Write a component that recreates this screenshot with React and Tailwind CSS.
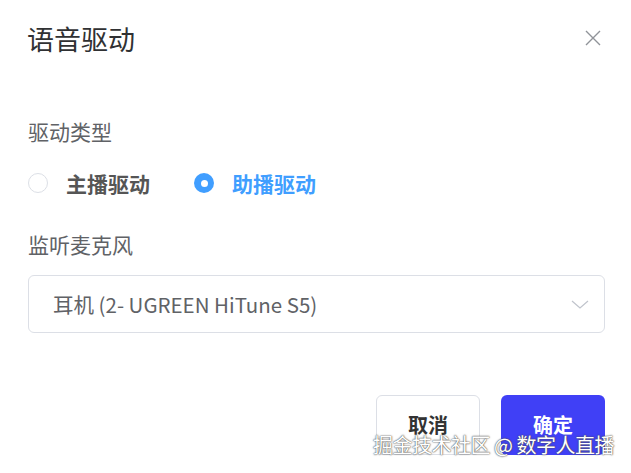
import React, { useState } from 'react';

const font = { fontFamily: '"Noto Sans CJK SC", "Noto Sans", sans-serif' };

function Radio({ checked, label, onClick }) {
  return (
    <button type="button" onClick={onClick} className="flex items-center gap-[18px]">
      {checked ? (
        <span className="w-[20px] h-[20px] rounded-full bg-[#409eff] flex items-center justify-center">
          <span className="w-[7px] h-[7px] rounded-full bg-white" />
        </span>
      ) : (
        <span className="w-[20px] h-[20px] rounded-full border border-[#dcdfe6] bg-white" />
      )}
      <span className={`text-[21px] font-bold leading-none ${checked ? 'text-[#409eff]' : 'text-[#555]'}`}>{label}</span>
    </button>
  );
}

export default function App() {
  const [mode, setMode] = useState('assist');

  return (
    <div className="w-[631px] h-[473px] bg-white relative overflow-hidden" style={font}>
      <div className="flex items-center justify-between h-[36px] mt-[20px] pl-[27px] pr-[30px]">
        <h1 className="text-[27px] leading-none text-[#303133]">语音驱动</h1>
        <svg width="16" height="16" viewBox="0 0 16 16" className="text-[#909399]">
          <path d="M1 1L15 15M15 1L1 15" stroke="currentColor" strokeWidth="1.4" />
        </svg>
      </div>

      <div className="px-[28px]">
        <div className="h-[30px] mt-[61px] flex items-center text-[21px] text-[#606266]">驱动类型</div>

        <div className="h-[30px] mt-[21px] flex items-center gap-[44px]">
          <Radio label="主播驱动" checked={mode === 'main'} onClick={() => setMode('main')} />
          <Radio label="助播驱动" checked={mode === 'assist'} onClick={() => setMode('assist')} />
        </div>

        <div className="h-[30px] mt-[32px] flex items-center text-[21px] text-[#606266]">监听麦克风</div>

        <div className="mt-[15px] h-[58px] w-[577px] border border-[#dcdfe6] rounded-[6px] flex items-center justify-between pl-[24px] pr-[15px]">
          <span className="text-[20.5px] text-[#606266]">耳机 (2- UGREEN HiTune S5)</span>
          <svg width="18" height="9" viewBox="0 0 18 9" className="text-[#c0c4cc]">
            <path d="M1 1L9 8L17 1" fill="none" stroke="currentColor" strokeWidth="1.2" />
          </svg>
        </div>
      </div>

      <div className="mt-[62px] flex justify-end gap-[21px] pr-[26px]">
        <button className="w-[104px] h-[60px] rounded-[6px] border border-[#dcdfe6] bg-white text-[20px] font-bold text-[#333]">取消</button>
        <button className="w-[104px] h-[60px] rounded-[6px] bg-[#4040f6] text-[20px] font-bold text-white">确定</button>
      </div>

      <div className="absolute left-[373px] top-[435px] text-[20px] leading-none text-white tracking-[-0.5px] [text-shadow:0_0_1px_#444,0_0_2px_#555]">
        掘金技术社区 @ 数字人直播
      </div>
    </div>
  );
}
